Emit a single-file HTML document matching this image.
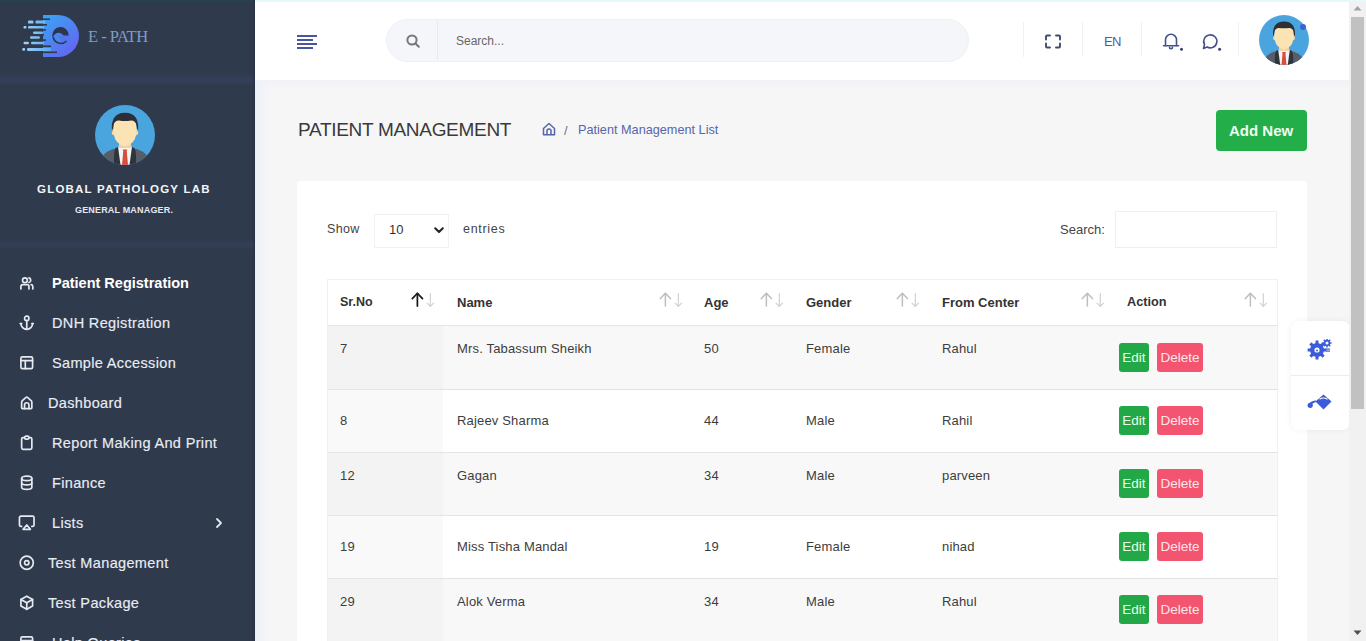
<!DOCTYPE html>
<html><head><meta charset="utf-8">
<style>
*{box-sizing:border-box;margin:0;padding:0}
html,body{width:1366px;height:641px;overflow:hidden;background:#f6f6f7;font-family:"Liberation Sans",sans-serif;}
.abs{position:absolute}
.t{position:absolute;white-space:nowrap;line-height:1}
#side{position:absolute;left:0;top:0;width:255px;height:641px;background:#303a4d}
#hdr{position:absolute;left:255px;top:0;width:1094px;height:80px;background:#fff}
#sb{position:absolute;left:1349px;top:0;width:17px;height:641px;background:#f1f1f1}
.nav{color:#e9edf3;font-size:14.5px;letter-spacing:0.35px;-webkit-text-stroke:0.15px #e9edf3}
.nav svg{position:absolute;left:20px;width:14px;height:14px;fill:none;stroke:#e1e6ee;stroke-width:2;stroke-linecap:round;stroke-linejoin:round}
.hd{font-weight:700;color:#333;font-size:13px}
.cell{color:#3d3d3d;font-size:13px;letter-spacing:0.17px}
.row{position:absolute;left:327px;width:950px;border-top:1px solid #e3e3e3}
.srt{position:absolute;left:0;top:0;width:118px;height:100%}
.btn-e{position:absolute;width:30px;height:29px;background:#22a847;border-radius:3px;color:#e6ffe9;font-size:13.5px;text-align:center;line-height:29px}
.btn-d{position:absolute;width:46px;height:29px;background:#f3546f;border-radius:3px;color:#ffe6ea;font-size:13.5px;text-align:center;line-height:29px}
.arr{position:absolute;top:292px;width:24px;height:16px}
</style></head><body>

<svg width="0" height="0" style="position:absolute"><defs>
<symbol id="av" viewBox="0 0 60 60">
 <clipPath id="avc"><circle cx="30" cy="30" r="30"/></clipPath>
 <g clip-path="url(#avc)">
  <rect width="60" height="60" fill="#4aa4de"/>
  <path d="M4,60 Q6,48 18,44 L42,44 Q54,48 56,60 Z" fill="#585e67"/>
  <path d="M20,43.5 L23.5,41.5 L30,60 L19,60 Q18.5,50 20,43.5Z" fill="#30343c"/>
  <path d="M40,43.5 L36.5,41.5 L30,60 L41,60 Q41.5,50 40,43.5Z" fill="#30343c"/>
  <path d="M23,41.5 L37,41.5 L34.5,60 L25.5,60 Z" fill="#f4f4f4"/>
  <path d="M28.2,47 L31.8,47 L33,60 L27,60Z" fill="#d64f3e"/>
  <path d="M27.8,44.5 L32.2,44.5 L31.5,48 L28.5,48Z" fill="#d64f3e"/>
  <rect x="24" y="33" width="12" height="10" fill="#f1d3a2"/>
  <ellipse cx="18.6" cy="27" rx="1.8" ry="3.2" fill="#f6d9a8"/>
  <ellipse cx="41.4" cy="27" rx="1.8" ry="3.2" fill="#f6d9a8"/>
  <path d="M18.5,20 Q18.5,13 30,13 Q41.5,13 41.5,20 L41,30 Q40,38.5 30,41.5 Q20,38.5 19,30 Z" fill="#fbe3b4"/>
  <path d="M17,27 Q15,8 30,7.8 Q45,8 43,27 L41.6,21 Q41,15.5 36,15.5 Q30,16.5 24,15.5 Q19,15.5 18.4,21 Z" fill="#2c2f36"/>
 </g>
</symbol></defs></svg>
<!-- SIDEBAR -->
<div id="side">
  <div class="abs" style="left:0;top:0;width:255px;height:2px;background:#254252"></div>
  <div class="abs" style="left:0;top:73px;width:255px;height:13px;background:linear-gradient(to bottom,rgba(52,64,92,0) 0%,#33405b 55%,rgba(52,64,92,0) 100%)"></div>
  <div class="abs" style="left:0;top:240px;width:255px;height:9px;background:linear-gradient(to bottom,rgba(52,64,92,0) 0%,#323f5a 55%,rgba(52,64,92,0) 100%)"></div>
  <div class="abs" style="left:252px;top:0;width:3px;height:641px;background:linear-gradient(to right,rgba(40,44,60,0),#2b3142)"></div>
  <!-- logo -->
  <svg class="abs" style="left:0;top:0" width="90" height="70" viewBox="0 0 90 70">
    <defs>
      <linearGradient id="lg" gradientUnits="userSpaceOnUse" x1="40" y1="15" x2="78" y2="57"><stop offset="0" stop-color="#36a9f4"/><stop offset="1" stop-color="#6a5df0"/></linearGradient>
      <linearGradient id="lg2" gradientUnits="userSpaceOnUse" x1="22" y1="0" x2="55" y2="0"><stop offset="0" stop-color="#a6d3f2"/><stop offset="1" stop-color="#4aa6f2"/></linearGradient>
    </defs>
    <path d="M43,15 H58 A21,21 0 0 1 58,57 H43 Z" fill="url(#lg)"/>
    <g stroke="#303a4d" stroke-width="1.6">
      <line x1="38" y1="19.2" x2="50" y2="19.2"/><line x1="38" y1="24.8" x2="47" y2="24.8"/>
      <line x1="38" y1="29.9" x2="46" y2="29.9"/><line x1="38" y1="35" x2="44" y2="35"/>
      <line x1="38" y1="40.1" x2="46" y2="40.1"/><line x1="38" y1="46.2" x2="51" y2="46.2"/><line x1="38" y1="52.3" x2="57" y2="52.3"/>
    </g>
    <g fill="url(#lg2)">
      <rect x="28" y="20.6" width="5.5" height="3" rx="1.2"/><rect x="35.5" y="20.6" width="10" height="3" rx="1.2"/>
      <rect x="23.5" y="26" width="3" height="2.6" rx="1"/><rect x="28" y="26" width="16" height="2.6" rx="1.2"/>
      <rect x="33" y="31.4" width="10" height="2.6" rx="1.2"/>
      <rect x="30" y="36.2" width="10" height="2.6" rx="1.2"/>
      <rect x="23.5" y="41.7" width="5.5" height="2.6" rx="1.2"/><rect x="31" y="41.7" width="13" height="2.6" rx="1.2"/>
      <rect x="22.3" y="48" width="2.8" height="2.8" rx="1"/><rect x="27" y="48" width="24" height="3" rx="1.2"/>
    </g>
    <circle cx="60.5" cy="35.2" r="8.2" fill="#2d3550"/>
    <circle cx="58.6" cy="38.4" r="5.6" fill="#4a86ef"/>
    <path d="M58,35.5 L70,35.5 L70,43 L62,43 Z" fill="#5176ef"/>
    <path d="M53.2,37 A7.8,7.8 0 0 0 66.5,41" stroke="#2d3550" stroke-width="1.5" fill="none"/>
  </svg>
  <div class="t" style="left:88px;top:28.5px;font-family:'Liberation Serif',serif;font-size:16.5px;color:#7f9dc2;letter-spacing:-0.5px">E - PATH</div>
  <!-- avatar -->
  <svg class="abs" style="left:95px;top:105px" width="60" height="60" viewBox="0 0 60 60"><use href="#av"/></svg>
  <div class="t" style="left:37px;top:183.5px;font-size:11.5px;font-weight:700;color:#f2f4f7;letter-spacing:1.22px">GLOBAL PATHOLOGY LAB</div>
  <div class="t" style="left:75px;top:206px;font-size:9px;font-weight:700;color:#e4e8ef;letter-spacing:0.17px">GENERAL MANAGER.</div>
  <!-- nav -->
  <svg class="abs" style="left:18px;top:274px" width="17.5" height="17.5" viewBox="0 0 24 24" fill="none" stroke="#e6eaf0" stroke-width="2.3" stroke-linecap="round" stroke-linejoin="round"><circle cx="9.5" cy="8.5" r="3.3"/><path d="M15 5.3a3.3 3.3 0 0 1 0 6.4"/><path d="M4 20.5v-3.5q0-2.5 2.5-2.5h6q2.5 0 2.5 2.5v3.5"/><path d="M18 14.6q2.3 0.3 2.3 2.5v3.4"/></svg>
  <svg class="abs" style="left:18px;top:314px" width="17.5" height="17.5" viewBox="0 0 24 24" fill="none" stroke="#e6eaf0" stroke-width="2.3" stroke-linecap="round" stroke-linejoin="round"><path d="M12 9v12"/><path d="M4 13a8 8 0 0 0 16 0"/><path d="M21 13h-2M5 13H3"/><circle cx="12" cy="6" r="3"/></svg>
  <svg class="abs" style="left:18px;top:354px" width="17.5" height="17.5" viewBox="0 0 24 24" fill="none" stroke="#e6eaf0" stroke-width="2.3" stroke-linecap="round" stroke-linejoin="round"><rect x="4" y="4" width="16" height="16" rx="2"/><path d="M4 9h16"/><path d="M10 9v11"/></svg>
  <svg class="abs" style="left:18px;top:394px" width="17.5" height="17.5" viewBox="0 0 24 24" fill="none" stroke="#e6eaf0" stroke-width="2.3" stroke-linecap="round" stroke-linejoin="round"><path d="M5 11Q5 10 6 9L11 4.5Q12 3.7 13 4.5L18 9Q19 10 19 11V19Q19 20 18 20H6Q5 20 5 19Z"/><path d="M9 20v-5a3 3 0 0 1 6 0v5"/></svg>
  <svg class="abs" style="left:18px;top:434px" width="17.5" height="17.5" viewBox="0 0 24 24" fill="none" stroke="#e6eaf0" stroke-width="2.3" stroke-linecap="round" stroke-linejoin="round"><path d="M9 5H7a2 2 0 0 0-2 2v12a2 2 0 0 0 2 2h10a2 2 0 0 0 2-2V7a2 2 0 0 0-2-2h-2"/><rect x="9" y="3" width="6" height="4" rx="2"/></svg>
  <svg class="abs" style="left:18px;top:474px" width="17.5" height="17.5" viewBox="0 0 24 24" fill="none" stroke="#e6eaf0" stroke-width="2.3" stroke-linecap="round" stroke-linejoin="round"><ellipse cx="12" cy="6" rx="7" ry="3"/><path d="M5 6v6a7 3 0 0 0 14 0V6"/><path d="M5 12v6a7 3 0 0 0 14 0v-6"/></svg>
  <svg class="abs" style="left:18px;top:514px" width="17.5" height="17.5" viewBox="0 0 24 24" fill="none" stroke="#e6eaf0" stroke-width="2.3" stroke-linecap="round" stroke-linejoin="round"><path d="M5 17H4a2 2 0 0 1-2-2V5a2 2 0 0 1 2-2h16a2 2 0 0 1 2 2v10a2 2 0 0 1-2 2h-1"/><path d="M12 15l5 6H7z"/></svg>
  <svg class="abs" style="left:18px;top:554px" width="17.5" height="17.5" viewBox="0 0 24 24" fill="none" stroke="#e6eaf0" stroke-width="2.3" stroke-linecap="round" stroke-linejoin="round"><circle cx="12" cy="12" r="9"/><circle cx="12" cy="12" r="3"/></svg>
  <svg class="abs" style="left:18px;top:594px" width="17.5" height="17.5" viewBox="0 0 24 24" fill="none" stroke="#e6eaf0" stroke-width="2.3" stroke-linecap="round" stroke-linejoin="round"><path d="M12 3l8 4.5v9L12 21l-8-4.5v-9z"/><path d="M12 12l8-4.5"/><path d="M12 12v9"/><path d="M12 12L4 7.5"/></svg>
  <svg class="abs" style="left:18px;top:634px" width="17.5" height="17.5" viewBox="0 0 24 24" fill="none" stroke="#e6eaf0" stroke-width="2.3" stroke-linecap="round" stroke-linejoin="round"><rect x="4" y="4" width="16" height="16" rx="2"/><path d="M4 9h16"/><path d="M10 9v11"/></svg>
  <div class="t nav" style="left:52px;top:276px;font-weight:700;color:#fff;letter-spacing:0px;-webkit-text-stroke:0">Patient Registration</div>
  <div class="t nav" style="left:52px;top:316px">DNH Registration</div>
  <div class="t nav" style="left:52px;top:356px">Sample Accession</div>
  <div class="t nav" style="left:48px;top:396px">Dashboard</div>
  <div class="t nav" style="left:52px;top:436px">Report Making And Print</div>
  <div class="t nav" style="left:52px;top:476px">Finance</div>
  <div class="t nav" style="left:52px;top:516px">Lists</div>
  <div class="t nav" style="left:48px;top:556px">Test Management</div>
  <div class="t nav" style="left:48px;top:596px">Test Package</div>
  <div class="t nav" style="left:52px;top:636px">Help Queries</div>
  <svg class="abs" style="left:214px;top:517px" width="10" height="12" viewBox="0 0 10 12"><path d="M3,2 L7,6 L3,10" fill="none" stroke="#e1e6ee" stroke-width="1.8" stroke-linecap="round" stroke-linejoin="round"/></svg>
</div>

<!-- HEADER -->
<div id="hdr">
  <div class="abs" style="left:0;top:0;width:1111px;height:2px;background:#e6f9fa;z-index:5"></div>
  <!-- hamburger -->
  <div class="abs" style="left:42px;top:35px;width:20px;height:2px;background:#4656a4"></div>
  <div class="abs" style="left:42px;top:39px;width:16px;height:2px;background:#4656a4"></div>
  <div class="abs" style="left:42px;top:43px;width:20px;height:2px;background:#4656a4"></div>
  <div class="abs" style="left:42px;top:47px;width:16px;height:2px;background:#4656a4"></div>
  <!-- search -->
  <div class="abs" style="left:131px;top:19px;width:583px;height:43px;border-radius:22px;background:#f5f6f9;border:1px solid #eef0f4"></div>
  <svg class="abs" style="left:151px;top:34px" width="14" height="14" viewBox="0 0 14 14"><circle cx="6" cy="6" r="4.6" fill="none" stroke="#777" stroke-width="2"/><line x1="9.5" y1="9.5" x2="12.8" y2="12.8" stroke="#777" stroke-width="2" stroke-linecap="round"/></svg>
  <div class="abs" style="left:182px;top:21px;width:1px;height:39px;background:#e8eaf0"></div>
  <div class="t" style="left:201px;top:35px;font-size:12px;color:#666">Search...</div>
  <!-- dividers -->
  <div class="abs" style="left:768px;top:22px;width:1px;height:35px;background:#f0f1f4"></div>
  <div class="abs" style="left:827px;top:22px;width:1px;height:35px;background:#f0f1f4"></div>
  <div class="abs" style="left:886px;top:22px;width:1px;height:35px;background:#f0f1f4"></div>
  <div class="abs" style="left:983px;top:22px;width:1px;height:35px;background:#f0f1f4"></div>
  <div class="t" style="left:849px;top:35px;font-size:13px;color:#4b5bb2;letter-spacing:-0.6px">EN</div>
  <!-- avatar -->
  <svg class="abs" style="left:1004px;top:15px" width="50" height="50" viewBox="0 0 60 60"><use href="#av"/></svg>
  <div class="abs" style="left:1045px;top:23.5px;width:6px;height:6px;border-radius:50%;background:#3d62d8"></div>
</div>

<!-- header icons -->
<svg class="abs" style="left:1000px;top:0" width="240" height="80" viewBox="1000 0 240 80" fill="none" stroke-linecap="round" stroke-linejoin="round">
  <g stroke="#414b70" stroke-width="1.9">
    <path d="M1046,39.5 V36.5 Q1046,35.5 1047,35.5 H1050"/>
    <path d="M1056,35.5 H1059 Q1060,35.5 1060,36.5 V39.5"/>
    <path d="M1060,43.5 V46.5 Q1060,47.5 1059,47.5 H1056"/>
    <path d="M1050,47.5 H1047 Q1046,47.5 1046,46.5 V43.5"/>
  </g>
  <g stroke="#43508a" stroke-width="1.6">
    <path d="M1165.5,45.5 V39.5 A5.5,5.2 0 0 1 1176.5,39.5 V45.5"/>
    <path d="M1163.5,45.8 H1178.5"/>
    <path d="M1169.5,47.3 A1.5,1.5 0 0 0 1172.5,47.3"/>
    <path d="M1203.5,48.5 L1204.5,44.5 A6.6,6.5 0 1 1 1207,47 Z"/>
  </g>
  <circle cx="1181.5" cy="49.3" r="1.5" fill="#3a4070"/>
  <circle cx="1219.6" cy="49.3" r="1.5" fill="#3a4070"/>
</svg>
<!-- MAIN -->
<div id="main">
  <div class="abs" style="left:255px;top:80px;width:1094px;height:9px;background:linear-gradient(to bottom,#f1f2f6,rgba(246,246,247,0))"></div>
  <div class="abs" style="left:255px;top:80px;width:16px;height:561px;background:linear-gradient(to right,#edf1f8,rgba(246,246,247,0))"></div>
  <div class="t" style="left:298px;top:120px;font-size:19px;color:#3a3a3a;letter-spacing:-0.3px">PATIENT MANAGEMENT</div>
  <svg class="abs" style="left:542px;top:122px" width="14" height="14" viewBox="0 0 14 14" fill="none" stroke="#5566aa" stroke-width="1.5" stroke-linejoin="round"><path d="M1.5,6.5 L7,1.5 L12.5,6.5 V12.8 H1.5 Z"/><path d="M5,12.8 V9 A2,2 0 0 1 9,9 V12.8"/></svg>
  <div class="t" style="left:564px;top:124px;font-size:13px;color:#6c757d">/</div>
  <div class="t" style="left:578px;top:124px;font-size:12.7px;color:#5566aa">Patient Management List</div>
  <div class="abs" style="left:1216px;top:110px;width:91px;height:41px;background:#23ae4a;border-radius:4px"></div>
  <div class="t" style="left:1229px;top:123px;font-size:15px;font-weight:700;color:#effff0">Add New</div>

  <!-- card -->
  <div class="abs" style="left:297px;top:181px;width:1010px;height:470px;background:#fff;border-radius:4px"></div>
  <div class="t" style="left:327px;top:223px;font-size:12.5px;color:#444;letter-spacing:0.3px">Show</div>
  <div class="abs" style="left:374px;top:214px;width:75px;height:34px;border:1px solid #f2f2f2;background:#fff"></div>
  <div class="t" style="left:389px;top:223px;font-size:13px;color:#333">10</div>
  <svg class="abs" style="left:434px;top:227px" width="10" height="7" viewBox="0 0 10 7"><path d="M1.2,1.2 L5,5 L8.8,1.2" fill="none" stroke="#222" stroke-width="2" stroke-linecap="round" stroke-linejoin="round"/></svg>
  <div class="t" style="left:463px;top:223px;font-size:12.5px;color:#444;letter-spacing:0.7px">entries</div>
  <div class="t" style="left:1060px;top:223px;font-size:13px;color:#444">Search:</div>
  <div class="abs" style="left:1115px;top:211px;width:162px;height:37px;border:1px solid #efefef;background:#fff"></div>

  <!-- table -->
  <div class="abs" style="left:327px;top:279px;width:951px;height:370px;border:1px solid #f0f0f0;border-bottom:none"></div>
  <div class="t hd" style="left:340px;top:296px;font-size:12.5px">Sr.No</div>
  <div class="t hd" style="left:457px;top:296px">Name</div>
  <div class="t hd" style="left:704px;top:296px">Age</div>
  <div class="t hd" style="left:806px;top:296px">Gender</div>
  <div class="t hd" style="left:942px;top:296px">From Center</div>
  <div class="t hd" style="left:1127px;top:296px;font-size:12.7px">Action</div>
  <svg class="arr" style="left:410px" width="26" height="17" viewBox="0 0 26 17" fill="none" stroke-linecap="round" stroke-linejoin="round"><g stroke="#1a1a1a" stroke-width="1.9"><path d="M8,15 V1.5"/><path d="M2.5,7 L8,1.2 L13.5,7"/></g><g stroke="#cfcfcf" stroke-width="1.2"><path d="M22,1.5 V15.5"/><path d="M18.5,12 L22,15.5 L25.5,12"/></g></svg>
<svg class="arr" style="left:658px" width="26" height="17" viewBox="0 0 26 17" fill="none" stroke-linecap="round" stroke-linejoin="round"><g stroke="#bdbdbd" stroke-width="1.6"><path d="M8,15 V1.5"/><path d="M2.5,7 L8,1.2 L13.5,7"/></g><g stroke="#cfcfcf" stroke-width="1.2"><path d="M22,1.5 V15.5"/><path d="M18.5,12 L22,15.5 L25.5,12"/></g></svg>
<svg class="arr" style="left:759px" width="26" height="17" viewBox="0 0 26 17" fill="none" stroke-linecap="round" stroke-linejoin="round"><g stroke="#bdbdbd" stroke-width="1.6"><path d="M8,15 V1.5"/><path d="M2.5,7 L8,1.2 L13.5,7"/></g><g stroke="#cfcfcf" stroke-width="1.2"><path d="M22,1.5 V15.5"/><path d="M18.5,12 L22,15.5 L25.5,12"/></g></svg>
<svg class="arr" style="left:895px" width="26" height="17" viewBox="0 0 26 17" fill="none" stroke-linecap="round" stroke-linejoin="round"><g stroke="#bdbdbd" stroke-width="1.6"><path d="M8,15 V1.5"/><path d="M2.5,7 L8,1.2 L13.5,7"/></g><g stroke="#cfcfcf" stroke-width="1.2"><path d="M22,1.5 V15.5"/><path d="M18.5,12 L22,15.5 L25.5,12"/></g></svg>
<svg class="arr" style="left:1080px" width="26" height="17" viewBox="0 0 26 17" fill="none" stroke-linecap="round" stroke-linejoin="round"><g stroke="#bdbdbd" stroke-width="1.6"><path d="M8,15 V1.5"/><path d="M2.5,7 L8,1.2 L13.5,7"/></g><g stroke="#cfcfcf" stroke-width="1.2"><path d="M22,1.5 V15.5"/><path d="M18.5,12 L22,15.5 L25.5,12"/></g></svg>
<svg class="arr" style="left:1243px" width="26" height="17" viewBox="0 0 26 17" fill="none" stroke-linecap="round" stroke-linejoin="round"><g stroke="#bdbdbd" stroke-width="1.6"><path d="M8,15 V1.5"/><path d="M2.5,7 L8,1.2 L13.5,7"/></g><g stroke="#cfcfcf" stroke-width="1.2"><path d="M22,1.5 V15.5"/><path d="M18.5,12 L22,15.5 L25.5,12"/></g></svg>

  <div class="abs" style="left:328px;top:325px;width:949px;height:64px;background:#f8f8f8;border-top:1px solid #e4e4e4"><div class="abs" style="left:0;top:0;width:115px;height:63px;background:#f3f3f3"></div></div>
  <div class="t cell" style="left:340px;top:342px">7</div><div class="t cell" style="left:457px;top:342px">Mrs. Tabassum Sheikh</div><div class="t cell" style="left:704px;top:342px">50</div><div class="t cell" style="left:806px;top:342px">Female</div><div class="t cell" style="left:942px;top:342px">Rahul</div>
  <div class="btn-e" style="left:1119px;top:343px">Edit</div><div class="btn-d" style="left:1157px;top:343px">Delete</div>
<div class="abs" style="left:328px;top:389px;width:949px;height:63px;background:#ffffff;border-top:1px solid #e4e4e4"><div class="abs" style="left:0;top:0;width:115px;height:62px;background:#f9f9f9"></div></div>
  <div class="t cell" style="left:340px;top:414px">8</div><div class="t cell" style="left:457px;top:414px">Rajeev Sharma</div><div class="t cell" style="left:704px;top:414px">44</div><div class="t cell" style="left:806px;top:414px">Male</div><div class="t cell" style="left:942px;top:414px">Rahil</div>
  <div class="btn-e" style="left:1119px;top:406px">Edit</div><div class="btn-d" style="left:1157px;top:406px">Delete</div>
<div class="abs" style="left:328px;top:452px;width:949px;height:63px;background:#f8f8f8;border-top:1px solid #e4e4e4"><div class="abs" style="left:0;top:0;width:115px;height:62px;background:#f3f3f3"></div></div>
  <div class="t cell" style="left:340px;top:469px">12</div><div class="t cell" style="left:457px;top:469px">Gagan</div><div class="t cell" style="left:704px;top:469px">34</div><div class="t cell" style="left:806px;top:469px">Male</div><div class="t cell" style="left:942px;top:469px">parveen</div>
  <div class="btn-e" style="left:1119px;top:469px">Edit</div><div class="btn-d" style="left:1157px;top:469px">Delete</div>
<div class="abs" style="left:328px;top:515px;width:949px;height:63px;background:#ffffff;border-top:1px solid #e4e4e4"><div class="abs" style="left:0;top:0;width:115px;height:62px;background:#f9f9f9"></div></div>
  <div class="t cell" style="left:340px;top:540px">19</div><div class="t cell" style="left:457px;top:540px">Miss Tisha Mandal</div><div class="t cell" style="left:704px;top:540px">19</div><div class="t cell" style="left:806px;top:540px">Female</div><div class="t cell" style="left:942px;top:540px">nihad</div>
  <div class="btn-e" style="left:1119px;top:532px">Edit</div><div class="btn-d" style="left:1157px;top:532px">Delete</div>
<div class="abs" style="left:328px;top:578px;width:949px;height:63px;background:#f8f8f8;border-top:1px solid #e4e4e4"><div class="abs" style="left:0;top:0;width:115px;height:62px;background:#f3f3f3"></div></div>
  <div class="t cell" style="left:340px;top:595px">29</div><div class="t cell" style="left:457px;top:595px">Alok Verma</div><div class="t cell" style="left:704px;top:595px">34</div><div class="t cell" style="left:806px;top:595px">Male</div><div class="t cell" style="left:942px;top:595px">Rahul</div>
  <div class="btn-e" style="left:1119px;top:595px">Edit</div><div class="btn-d" style="left:1157px;top:595px">Delete</div>

</div>

<!-- PANEL -->
<div class="abs" style="left:1291px;top:321px;width:59px;height:109px;background:#fff;border-radius:8px;box-shadow:0 0 6px rgba(0,0,0,0.06)">
  <div class="abs" style="left:0;top:54px;width:59px;height:1px;background:#ececec"></div>
</div>
<svg class="abs" style="left:1307px;top:339px" width="26" height="22" viewBox="0 0 26 22"><path fill-rule="evenodd" fill="#3b5bd8" d="M16.84,9.50 L19.38,9.51 L19.38,12.49 L16.84,12.50 L15.90,14.77 L17.69,16.58 L15.58,18.69 L13.77,16.90 L11.50,17.84 L11.49,20.38 L8.51,20.38 L8.50,17.84 L6.23,16.90 L4.42,18.69 L2.31,16.58 L4.10,14.77 L3.16,12.50 L0.62,12.49 L0.62,9.51 L3.16,9.50 L4.10,7.23 L2.31,5.42 L4.42,3.31 L6.23,5.10 L8.50,4.16 L8.51,1.62 L11.49,1.62 L11.50,4.16 L13.77,5.10 L15.58,3.31 L17.69,5.42 L15.90,7.23Z M12.60,11.00 A2.6,2.6 0 1 0 7.40,11.00 A2.6,2.6 0 1 0 12.60,11.00Z"/><circle cx="10" cy="11.5" r="1" fill="#3b5bd8"/><path fill-rule="evenodd" fill="#3b5bd8" d="M23.32,3.27 L24.54,3.28 L24.54,4.72 L23.32,4.73 L22.86,5.83 L23.72,6.70 L22.70,7.72 L21.83,6.86 L20.73,7.32 L20.72,8.54 L19.28,8.54 L19.27,7.32 L18.17,6.86 L17.30,7.72 L16.28,6.70 L17.14,5.83 L16.68,4.73 L15.46,4.72 L15.46,3.28 L16.68,3.27 L17.14,2.17 L16.28,1.30 L17.30,0.28 L18.17,1.14 L19.27,0.68 L19.28,-0.54 L20.72,-0.54 L20.73,0.68 L21.83,1.14 L22.70,0.28 L23.72,1.30 L22.86,2.17Z M21.50,4.00 A1.5,1.5 0 1 0 18.50,4.00 A1.5,1.5 0 1 0 21.50,4.00Z"/><rect x="19" y="9.5" width="4" height="1.2" fill="#3b5bd8"/><rect x="19" y="11.5" width="4" height="1.2" fill="#3b5bd8"/></svg>
<svg class="abs" style="left:1306px;top:392px" width="28" height="20" viewBox="0 0 28 20"><path d="M9.5,9.5 L17.5,2.5 L25.5,9.5 L17.5,17.5 Z" fill="#3b5bd8"/><path d="M13.5,7.2 Q17.5,4.8 21.5,7.2" stroke="#fff" stroke-width="1.1" fill="none"/><path d="M3,12 Q5,8.5 10,8.5 L11,10 Q7,10.5 6,12.5Z" fill="#3b5bd8"/><circle cx="4.2" cy="13.3" r="2.6" fill="#3b5bd8"/></svg>
<!-- SCROLLBAR -->
<div id="sb">
  <div class="abs" style="left:2px;top:17px;width:13px;height:392px;background:#c1c1c1"></div>
  <svg class="abs" style="left:0;top:0" width="17" height="17" viewBox="0 0 17 17"><path d="M4.5,10.5 L8.5,6 L12.5,10.5Z" fill="#a3a3a3"/></svg>
  <svg class="abs" style="left:0;top:624px" width="17" height="17" viewBox="0 0 17 17"><path d="M4.5,6.5 L8.5,11 L12.5,6.5Z" fill="#505050"/></svg>
</div>

</body></html>
